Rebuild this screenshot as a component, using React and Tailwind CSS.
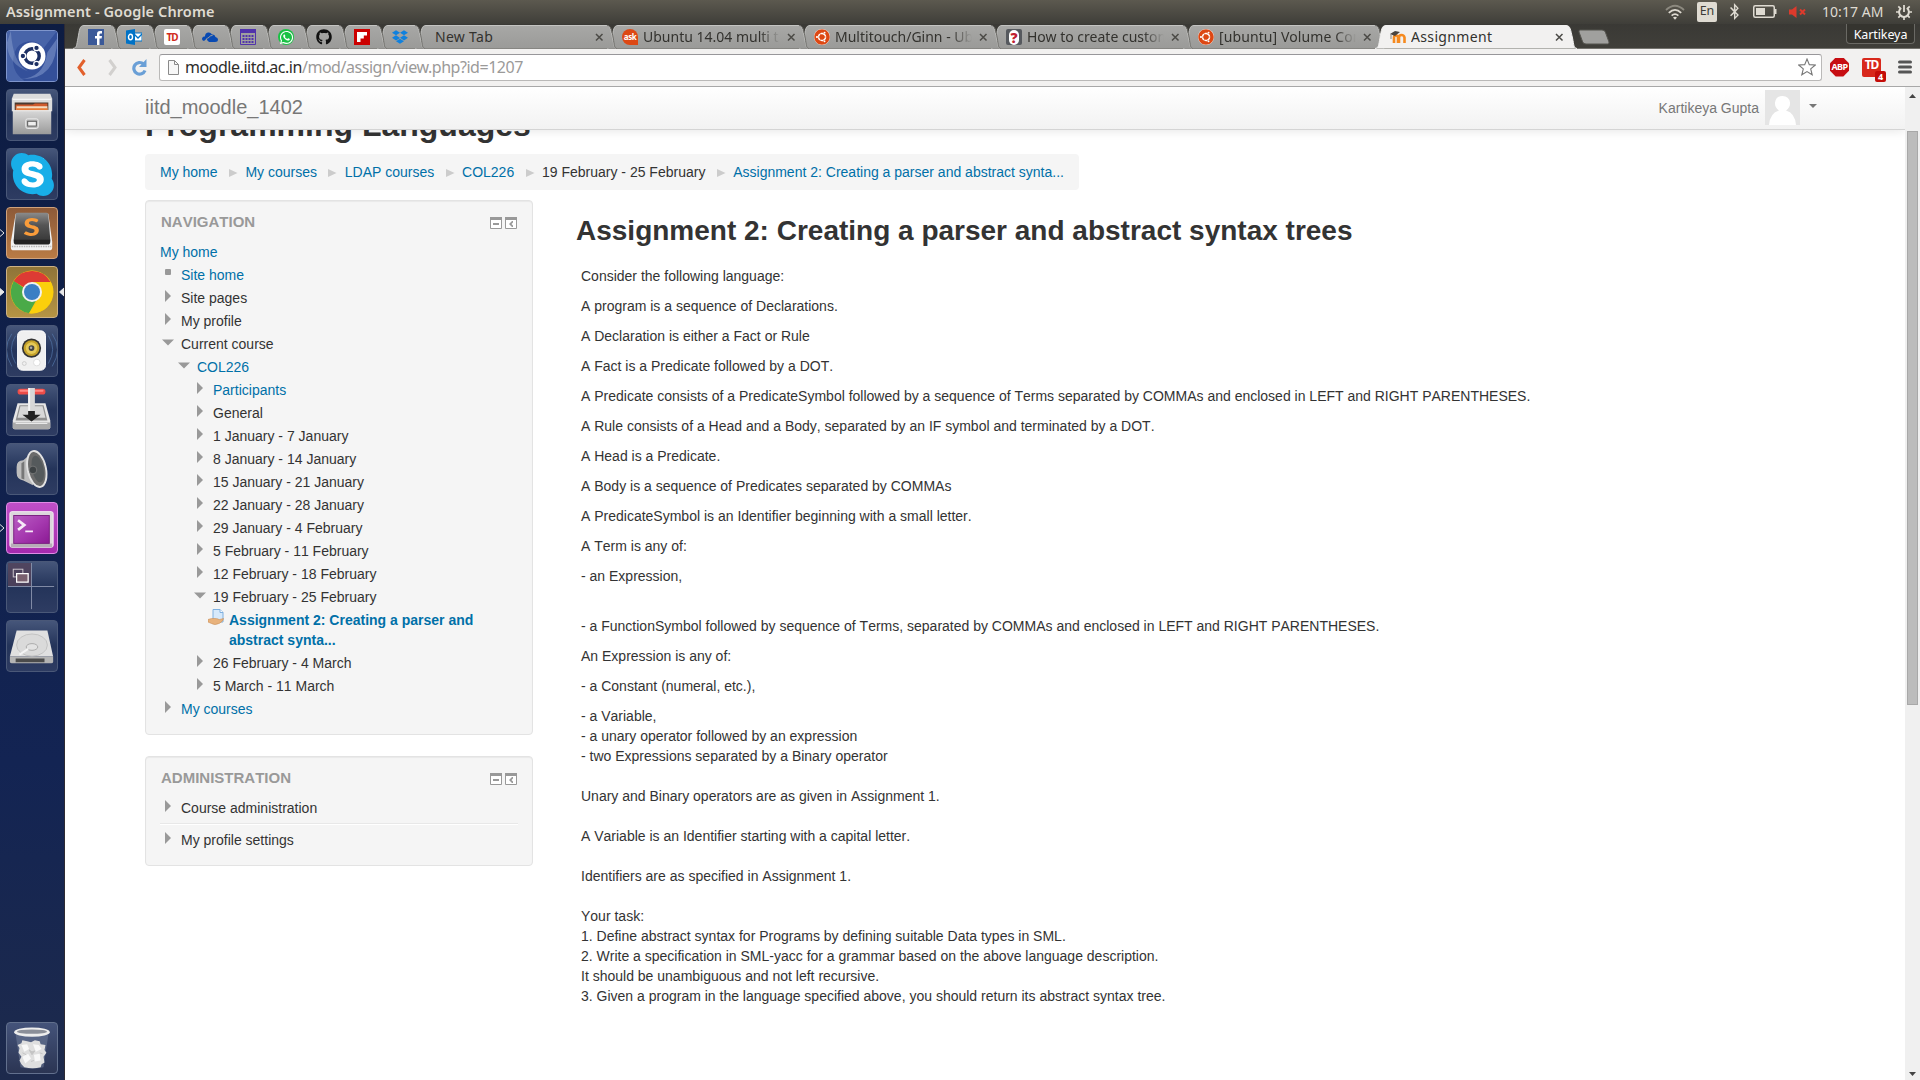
import React from "react";
import { FaGithub, FaDropbox, FaUbuntu, FaWhatsapp, FaSkype, FaBluetoothB } from "react-icons/fa";

const UI = "font-['Noto_Sans','Open_Sans',sans-serif]";

/* ---------- top panel ---------- */
function TopPanel() {
  return (
    <header className={`flex h-6 shrink-0 items-center bg-linear-to-b from-[#5c594f] to-[#3f3e39] pb-px pl-1.5 pr-2 text-[#dfdbd2] ${UI}`}>
      <span className="text-[14.5px] font-semibold leading-[23px] tracking-[0.1px]">Assignment - Google Chrome</span>
      <div className="ml-auto flex items-center">
        <svg className="mr-3" width="20" height="16" viewBox="0 0 20 16" fill="none" stroke="#dfdbd2" strokeWidth="1.8">
          <path d="M1 6Q10-2.500 19 6" stroke="#8c897f" />
          <path d="M3.800 8.800Q10 3 16.200 8.800M6.600 11.600Q10 8.600 13.400 11.600" />
          <path d="M8 13.500Q10 12 12 13.500L10 15.800z" fill="#dfdbd2" stroke="none" />
        </svg>
        <span className="mr-[9px] flex h-5 w-5 items-center justify-center rounded-[2px] bg-[#dfdbd2] text-[12.5px] text-[#3c3b37]">En</span>
        <FaBluetoothB className="mr-2.5" size={17} />
        <svg className="mr-3" width="24" height="13" viewBox="0 0 24 13">
          <rect x=".75" y=".75" width="20.500" height="11.500" rx="1.500" fill="none" stroke="#dfdbd2" strokeWidth="1.500" />
          <rect x="3" y="3" width="9" height="7" fill="#dfdbd2" />
          <path d="M22 4h1.500v5H22z" fill="#dfdbd2" />
        </svg>
        <svg className="mr-[15px]" width="18" height="12" viewBox="0 0 18 12">
          <path d="M0 3.500h3L7.500 0v12L3 8.500H0z" fill="#dd3a2c" />
          <path d="M11 3.500l5 5m0-5l-5 5" stroke="#dd3a2c" strokeWidth="2" />
        </svg>
        <span className="mr-[13px] w-[61px] whitespace-nowrap text-[14px] leading-[23px] tracking-[0.05px]">10:17 AM</span>
        <svg width="16" height="16" viewBox="0 0 16 16" fill="none" stroke="#dfdbd2">
          <path d="M5.200 4a4.900 4.900 0 1 0 5.600 0" strokeWidth="2" />
          <path d="M8 1v7" strokeWidth="1.800" />
          <path d="M0 8h3M13 8h3M2.300 2.300l2 2M13.700 2.300l-2 2M2.300 13.700l2-2M13.700 13.700l-2-2M8 13v3" strokeWidth="1.700" />
        </svg>
      </div>
    </header>
  );
}

/* ---------- launcher ---------- */
const tile = "relative flex h-[52px] w-[52px] shrink-0 items-center justify-center overflow-hidden rounded-[4px] border";
const darkTile = "border-[#4a5878] bg-linear-to-b from-[#46567a] via-[#24345a] to-[#2e3c62]";

function Pip({ side, filled }) {
  const cls = side === "left" ? "absolute -left-1.5 top-[21px]" : "absolute left-[53px] top-[21px]";
  return (
    <svg className={cls} width="5" height="10" viewBox="0 0 5 10">
      <path d={side === "left" ? "M0 1.500L4 5L0 8.500" : "M5 1L.5 5L5 9z"} fill={filled ? "#e8e8e8" : "none"} stroke="#e8e8e8" strokeWidth="1" />
    </svg>
  );
}

function Launcher() {
  return (
    <aside className="flex w-[65px] shrink-0 flex-col gap-[7px] border-r border-[#2d2a33] bg-linear-to-b from-[#0d1c42] via-[#132453] via-70% to-[#1d2a4c] px-1.5 pb-1.5 pt-1.5">
      <div className={`${tile} border-[#7f95cc] bg-[#3a559e]`}>
        <svg width="52" height="52" viewBox="0 0 52 52">
          <rect width="52" height="52" fill="#34509a" />
          <path d="M0 0h52L38 18A17 17 0 0 0 8 22Q2 40 18 52H0z" fill="#5672b4" opacity=".6" />
          <path d="M52 8Q52 52 12 50Q38 50 42 22z" fill="#8aa0d2" opacity=".5" />
          <path d="M4 0Q6 34 22 42Q0 34 0 12z" fill="#a6b8de" opacity=".35" />
          <circle cx="26" cy="26" r="14" fill="#fff" />
          <circle cx="26" cy="26" r="7.500" fill="none" stroke="#1c2f63" strokeWidth="3.600" />
          <g fill="#1c2f63" stroke="#fff" strokeWidth="1.300">
            <circle cx="16.500" cy="26" r="2.900" /><circle cx="30.700" cy="17.600" r="2.900" /><circle cx="30.700" cy="34.400" r="2.900" />
          </g>
        </svg>
      </div>

      <div className={`${tile} ${darkTile}`}>
        <svg width="52" height="52" viewBox="0 0 52 52">
          <defs><linearGradient id="cab" x2="0" y2="1"><stop stopColor="#d9d9d9" /><stop offset="1" stopColor="#9a9a9a" /></linearGradient></defs>
          <path d="M7 4h38l2 5v13H5V9z" fill="#dcdcdc" /><path d="M6 9h40v1.500H6z" fill="#f5f5f5" />
          <path d="M8 13h35v9H8z" fill="#4a3a30" />
          <path d="M9 15h18l2-1h13v8H9z" fill="#cf5a2c" /><path d="M10 17h32v5H10z" fill="#f4dcc0" /><path d="M10 19h32v3H10z" fill="#e87a35" />
          <path d="M6 21h40v25H6z" fill="url(#cab)" /><path d="M6 21h40v1H6z" fill="#eee" />
          <rect x="19.500" y="30" width="13" height="10" rx="2" fill="#bcbcbc" stroke="#ededed" />
          <rect x="21.500" y="32.500" width="9" height="5" fill="#eee" stroke="#555" />
        </svg>
      </div>

      <div className={`${tile} ${darkTile}`}>
        <span className="absolute h-8 w-6 bg-white" />
        <FaSkype className="relative text-[#18aee8]" size={49} />
      </div>

      <div className="relative">
        <div className={`${tile} border-[#d0a27c] bg-linear-to-b from-[#8d5a38] to-[#b97b45]`}>
          <svg width="52" height="52" viewBox="0 0 52 52">
            <defs><linearGradient id="sub" x2="0" y2="1"><stop stopColor="#8b8b8b" /><stop offset=".4" stopColor="#555" /><stop offset="1" stopColor="#333" /></linearGradient></defs>
            <path d="M9 6h34l4 29v6q0 3-3 3H7q-3 0-3-3v-6z" fill="#f1f1f1" /><path d="M5 40h41" stroke="#b3b3b3" strokeWidth="1.500" strokeDasharray="1.500 1" />
            <path d="M11 5h30q2 0 2 2l2 26q0 3-2 4H9q-2-1-2-4L9 7q0-2 2-2z" fill="url(#sub)" />
            <path d="M7 33h38v2q0 3-3 3H10q-3 0-3-3z" fill="#222" />
          </svg>
          <span className="absolute top-[3px] font-['Lato',sans-serif] text-[24px] font-black leading-8 text-[#f99c3a] scale-x-125">S</span>
        </div>
        <Pip side="left" />
      </div>

      <div className="relative">
        <div className={`${tile} border-[#cdb184] bg-linear-to-b from-[#8f7438] to-[#b59444]`}>
          <svg width="44" height="44" viewBox="0 0 44 44">
            <circle cx="22" cy="22" r="21.500" fill="#f7c90d" />
            <path d="M22 22L3.600 11.300A21.300 21.300 0 0 1 40.600 12H22z" fill="#dd3b34" />
            <path d="M3.800 11A21.500 21.500 0 0 0 19 43.200L28 27H22L13.300 17.500z" fill="#4aaa48" />
            <path d="M22 12h18.700A21.500 21.500 0 0 1 19 43.300L30.600 27z" fill="#fbcf0c" />
            <circle cx="22" cy="22" r="10" fill="#f1f1f1" /><circle cx="22" cy="22" r="8" fill="#3b7fc4" />
          </svg>
        </div>
        <Pip side="left" filled /><Pip side="right" filled />
      </div>

      <div className={`${tile} ${darkTile}`}>
        <svg width="52" height="52" viewBox="0 0 52 52">
          <g fill="none" stroke="#5b82b8" opacity=".6"><path d="M9 10Q0 24 9 39M5 8Q-6 24 5 42M43 10Q52 24 43 39M47 8Q58 24 47 42" /></g>
          <rect x="11" y="5" width="29" height="41" rx="5" fill="#f0f0f0" stroke="#fff" />
          <circle cx="25.500" cy="23" r="10" fill="#333" /><circle cx="25.500" cy="23" r="8.300" fill="#c5a22a" /><circle cx="25.500" cy="23" r="6" fill="#e5c957" /><circle cx="25.500" cy="23" r="3" fill="#444" /><circle cx="25" cy="22.500" r="1.300" fill="#aaa" />
          <circle cx="31" cy="38" r="3.500" fill="#fff" stroke="#ddd" /><circle cx="18" cy="39" r="2" fill="none" stroke="#ccc" />
        </svg>
      </div>

      <div className={`${tile} ${darkTile}`}>
        <svg width="52" height="52" viewBox="0 0 52 52">
          <path d="M11 19h29l5 18v7q0 2-2 2H8q-2 0-2-2v-7z" fill="#e6e6e6" /><path d="M13 21h25l4 16H9z" fill="#8f8f8f" /><path d="M14 22h23l3 12H11z" fill="#d8d8d8" /><path d="M6 39h39v5q0 2-2 2H8q-2 0-2-2z" fill="#aaa" /><path d="M9 40h33" stroke="#eee" />
          <rect x="11" y="4" width="29" height="6" rx="3" fill="#ed4c48" /><rect x="13" y="5" width="25" height="2" rx="1" fill="#ff8984" />
          <path d="M22 3h7v24h-7z" fill="#d7d7d7" /><path d="M22 3h2v24h-2z" fill="#f4f4f4" />
          <path d="M22 27h7v4h6L25.500 38L16 31h6z" fill="#222" />
        </svg>
      </div>

      <div className={`${tile} ${darkTile}`}>
        <svg width="52" height="52" viewBox="0 0 52 52">
          <path d="M10 24Q10 17 17 17L27 8V43L17 38Q10 37 10 30z" fill="#bdbdbd" />
          <path d="M15 20L18 18V37L15 36z" fill="#777" />
          <ellipse cx="31" cy="26" rx="9.500" ry="19" transform="rotate(-12 31 26)" fill="#6b6b6b" stroke="#e2e2e2" strokeWidth="2" />
          <ellipse cx="32" cy="26" rx="6" ry="14" transform="rotate(-12 32 26)" fill="#555a5c" /><circle cx="27" cy="27" r="4" fill="#3e4345" stroke="#888" strokeWidth=".7" />
        </svg>
      </div>

      <div className="relative">
        <div className={`${tile} border-[#e08be5] bg-linear-to-b from-[#bf4fc8] to-[#a62aae]`}>
          <svg width="52" height="52" viewBox="0 0 52 52">
            <defs><linearGradient id="term" x2="1" y2="1"><stop stopColor="#b95cc2" /><stop offset=".5" stopColor="#a63ab0" /><stop offset="1" stopColor="#8b1a94" /></linearGradient></defs>
            <rect x="3" y="9" width="45" height="37" rx="2" fill="#dcd6dc" stroke="#f5eef5" /><path d="M4 42h43v4H4z" fill="#b7adb7" />
            <rect x="7" y="13" width="37" height="29" fill="url(#term)" stroke="#7a2080" />
            <path d="M11.500 18l6.500 5l-6.500 5" fill="none" stroke="#f6e9f7" strokeWidth="2.800" /><path d="M19 29.500h8" stroke="#f6e9f7" strokeWidth="2" />
          </svg>
        </div>
        <Pip side="left" />
      </div>

      <div className={`${tile} ${darkTile}`}>
        <svg width="52" height="52" viewBox="0 0 52 52">
          <rect x="1" y="1" width="24" height="24" fill="#54425a" opacity=".8" /><path d="M25.500 1v48M1 25.500h48" stroke="#8590aa" />
          <rect x="6.500" y="7.500" width="10" height="8" fill="none" stroke="#cfc8cf" /><path d="M10 12h12v9H10z" fill="#79606f" stroke="#fff" strokeWidth="1.300" />
        </svg>
      </div>

      <div className={`${tile} ${darkTile}`}>
        <svg width="52" height="52" viewBox="0 0 52 52">
          <path d="M10 10h32l6 27H3z" fill="#e0e0e0" /><path d="M3 37h45v5q0 2-2 2H5q-2 0-2-2z" fill="#b4b4b4" /><path d="M9 39h30v4H9z" fill="#4b4b4b" />
          <ellipse cx="26" cy="25" rx="16" ry="11.500" fill="#dadada" stroke="#c2c2c2" /><ellipse cx="26" cy="27" rx="6" ry="3.500" fill="#e2e2e2" stroke="#aaa" />
          <path d="M13 35l9-6" stroke="#f4f4f4" strokeWidth="2" />
        </svg>
      </div>

      <div className={`${tile} mt-auto border-[#62708d] bg-linear-to-b from-[#44537a] to-[#2b3553]`}>
        <svg width="52" height="52" viewBox="0 0 52 52">
          <path d="M9 12h34l-5 34q-12 3-24 0z" fill="#7d8aa5" opacity=".45" />
          <path d="M11 23l4-2 1-3 5 1 4 1 4-2 5 1 1 3 5 1-1 5 2 3-3 4 1 6-3 2-1 3q-8 2-17 0l-3-3-2-4 2-4-3-4 1-5z" fill="#dfdfdf" />
          <path d="M15 23l6-1 2 5-5 3zM27 22l6 1 3 4-6 3zM16 35l6-3 3 5-6 5zM28 33l6-1 1 7-6 1z" fill="#f8f8f8" />
          <path d="M23 28l3 2 3-1-3 4zM16 31l4 2M34 31l3 1M25 40l3-1" fill="#c4c4c4" stroke="#c4c4c4" />
          <ellipse cx="26" cy="9.500" rx="18.500" ry="4.800" fill="#ededed" /><ellipse cx="26" cy="9" rx="15.500" ry="2.300" fill="#8b8f99" />
        </svg>
      </div>
    </aside>
  );
}

/* ---------- tabs ---------- */
function TabShape({ width, active }) {
  const w = width;
  const shape = `M0 24.500C4 24 3.500 21 5 14C6.500 6 6.500 1.500 11 1.500H${w - 11}C${w - 6.500} 1.500 ${w - 6.500} 6 ${w - 4.500} 14C${w - 3} 21 ${w - 3.500} 24 ${w} 24.500`;
  return (
    <svg className="absolute inset-0" width={w} height="25" viewBox={`0 0 ${w} 25`}>
      <defs><linearGradient id="tab" x2="0" y2="1"><stop stopColor="#a8a8a6" /><stop offset="1" stopColor="#9a9a98" /></linearGradient></defs>
      <path d={shape} fill={active ? "#f2f1f0" : "url(#tab)"} stroke={active ? "#f2f1f0" : "#c4c4c2"} strokeWidth="1" />
      {!active && <path d={`M${w - 10} 1.500C${w - 5.500} 2 ${w - 5.500} 6 ${w - 3.800} 14C${w - 2.500} 21 ${w - 3} 24 ${w} 24.500`} fill="none" stroke="#6e6d69" />}
    </svg>
  );
}

function UbuntuIcon() {
  return <span className="flex h-4 w-4 items-center justify-center rounded-full bg-white"><FaUbuntu size={16} color="#dd4814" /></span>;
}

const pinned = [
  <svg width="16" height="16" viewBox="0 0 16 16"><path d="M0 0h16v16H0z" fill="#3b5998" /><path d="M9 16V9.500H7V7h2V5q0-3 3-3h2v2.500h-1.300Q11.500 4.500 11.500 5.500V7H14l-.4 2.500h-2.100V16z" fill="#fff" /></svg>,
  <svg width="16" height="16" viewBox="0 0 16 16"><path d="M8 4h8v8H8z" fill="#fff" stroke="#0072c6" /><path d="M8 5l4 4 4-4" fill="none" stroke="#0072c6" strokeWidth="1.300" /><path d="M0 1.500L9 0v16L0 14.500z" fill="#0072c6" /><ellipse cx="4.500" cy="8" rx="2" ry="2.700" fill="none" stroke="#fff" strokeWidth="1.400" /></svg>,
  <span className="flex h-4 w-4 items-center justify-center rounded-[2px] bg-white text-[10px] font-bold tracking-[-1px] text-[#d02a20]">TD</span>,
  <svg width="16" height="16" viewBox="0 0 16 16"><path d="M2 12Q-1 11 .5 8.500Q1.500 7 3 7.500Q3 4 6 3.500Q8.500 3 10 5.500Q13 5 13.500 8Q16 8.500 16 10.500Q16 13 13 13H7L5 11Q4 9 6.500 8" fill="#094ab2" /><path d="M4.800 13Q3.500 9 7 8.500Q8 6 10.500 6.500" fill="none" stroke="#a0a09e" /></svg>,
  <svg width="16" height="16" viewBox="0 0 16 16"><path d="M.5 1h15v14.500H.5z" fill="#a0a09e" stroke="#5133ab" /><path d="M0 0h16v4H0z" fill="#5133ab" /><path d="M3.500 6v8M6.500 6v8M9.500 6v8M12.500 6v8" stroke="#5133ab" strokeWidth="2" strokeDasharray="2 1" /></svg>,
  <span className="flex h-4 w-4 items-center justify-center rounded-full bg-[#19c244]"><FaWhatsapp size={15} color="#fff" /></span>,
  <FaGithub size={16} color="#111" />,
  <svg width="16" height="16" viewBox="0 0 16 16"><path d="M0 0h16v16H0z" fill="#c00" /><path d="M3 3h10v3.400H9.800v3.200H6.500V13H3z" fill="#fff" /></svg>,
  <FaDropbox size={16} color="#1081de" />,
];

const askIcon = <span className="relative flex h-4 w-4 items-center justify-center rounded-full rounded-br-none bg-[#dd4814] text-[8px] font-bold tracking-[-0.5px] text-white">ask</span>;
const whatIcon = <span className="flex h-4 w-4 items-center justify-center rounded-[2px] bg-[#56595e]"><span className="flex h-[15px] w-[10px] items-center justify-center rounded-full bg-white text-[14px] font-black text-[#c02030]">?</span></span>;
const moodleIcon = (
  <svg width="16" height="16" viewBox="0 0 16 16"><path d="M4 14V8.500Q4 6.500 6 6.500T8 8.500V14M9 14V8.500Q9 6 11.500 6T14.500 8.500V14" fill="none" stroke="#f68a1f" strokeWidth="2.600" /><path d="M0 5l5-3 5 1-5 4z" fill="#4a4540" /><path d="M1 5v5" stroke="#8d8780" /></svg>
);

const tabs = [
  { title: "New Tab", z: "z-7", spacing: "tracking-[0.3px]" },
  { title: "Ubuntu 14.04 multi t", icon: askIcon, z: "z-6", spacing: "tracking-normal" },
  { title: "Multitouch/Ginn - Ubuntu", icon: <UbuntuIcon />, z: "z-5", spacing: "tracking-normal" },
  { title: "How to create custom", icon: whatIcon, z: "z-4", spacing: "tracking-normal" },
  { title: "[ubuntu] Volume Control", icon: <UbuntuIcon />, z: "z-3", spacing: "tracking-[0.1px]" },
  { title: "Assignment", icon: moodleIcon, z: "z-20", active: true, spacing: "tracking-[0.35px]" },
];
const pinnedZ = ["z-18", "z-17", "z-16", "z-15", "z-14", "z-13", "z-12", "z-11", "z-10"];

function TabStrip() {
  return (
    <div className={`flex h-[25px] shrink-0 border-b border-[#73726d] bg-linear-to-b from-[#3a3935] to-[#403f3a] pl-2 ${UI}`}>
      {pinned.map((icon, i) => (
        <div key={i} className={`relative -mr-2.5 flex h-[25px] w-12 shrink-0 justify-center pt-[5px] pr-0.5 ${pinnedZ[i]}`}>
          <TabShape width={48} />
          <span className="relative h-4">{icon}</span>
        </div>
      ))}
      {tabs.map((t) => (
        <div key={t.title} className={`relative -mr-2.5 flex h-[25px] w-[202px] shrink-0 items-center ${t.icon ? "pl-[15px]" : "pl-5"} pr-[13px] ${t.z}`}>
          <TabShape width={202} active={t.active} />
          {t.icon && <span className="relative mr-[5px] mt-px">{t.icon}</span>}
          <span className={`relative mr-[7px] mt-px min-w-0 flex-1 overflow-hidden whitespace-nowrap text-[14px] leading-5 text-[#33322e] ${t.spacing} ${t.active || !t.icon ? "" : "mask-r-from-85% mask-r-to-100%"}`}>{t.title}</span>
          <svg className="relative mt-px" width="9" height="9" viewBox="0 0 9 9"><path d="M1 1l6.500 6.500m0-6.500L1 7.500" stroke="#4b4a46" strokeWidth="1.500" /></svg>
        </div>
      ))}
      <svg className="ml-[11px] mt-[5px]" width="32" height="16" viewBox="0 0 32 16"><path d="M2 1h22q2.500 0 3.300 2L31 13q.5 2-1.500 2H8q-2.500 0-3.300-2L1 3q-.5-2 1-2z" fill="#a0a09e" stroke="#55544f" /></svg>
      <span className="ml-auto mr-[5px] flex h-5 w-[69px] items-center justify-center rounded-b-[4px] border border-t-0 border-[#6a6964] bg-[#35342f] pt-0.5 text-[12.500px] leading-4 tracking-[-0.1px] text-white">Kartikeya</span>
    </div>
  );
}

function Toolbar() {
  return (
    <div className={`flex h-[38px] shrink-0 items-center border-b border-[#a8a8a8] bg-[#f2f1f0] pb-px pl-3 pr-2 ${UI}`}>
      <svg width="9" height="17" viewBox="0 0 9 17"><path d="M7.500 1L2 8.500l5.500 7.500" fill="none" stroke="#e2602c" strokeWidth="3" /></svg>
      <svg className="ml-[22px]" width="9" height="17" viewBox="0 0 9 17"><path d="M1.500 1L7 8.500L1.500 16" fill="none" stroke="#d2d0ce" strokeWidth="3" /></svg>
      <svg className="ml-3.5" width="16" height="17" viewBox="0 0 16 17"><path d="M12.500 5A5.800 5.800 0 1 0 14 11.500" fill="none" stroke="#6a9fd6" strokeWidth="3.200" /><path d="M15.500 0v8H8z" fill="#6a9fd6" /></svg>
      <div className="ml-3 flex h-[27px] flex-1 items-center rounded-[3px] border border-[#bab9b8] border-t-[#98979a] bg-white pl-2 pr-[5px]">
        <svg width="11" height="15" viewBox="0 0 11 15"><path d="M.5.5h6l4 4v10H.5z" fill="#f7f7f7" stroke="#8a8a8a" /><path d="M6.500.5v4h4" fill="none" stroke="#8a8a8a" /></svg>
        <span className="ml-[6px] text-[16px] leading-6 tracking-[-0.46px] text-[#9b9a99]"><span className="text-[#2e2d2b]">moodle.iitd.ac.in</span>/mod/assign/view.php?id=1207</span>
        <svg className="ml-auto" width="18" height="18" viewBox="0 0 18 18"><path d="M9 1l2.300 5.600 6 .4-4.600 3.900 1.500 5.900L9 13.600l-5.200 3.200 1.500-5.900L.7 7l6-.4z" fill="#fff" stroke="#777" strokeWidth="1.100" /></svg>
      </div>
      <span className="ml-2 flex h-[19px] w-[19px] items-center justify-center bg-[#c70d12] text-[9px] font-bold tracking-[-0.6px] text-white [clip-path:polygon(30%_0,70%_0,100%_30%,100%_70%,70%_100%,30%_100%,0_70%,0_30%)]">ABP</span>
      <span className="relative ml-[13px] flex h-[19px] w-[19px] items-center justify-center rounded-[2px] bg-[#d8281c] pb-1 text-[12px] font-bold tracking-[-1px] text-white">
        TD
        <span className="absolute -bottom-[5px] -right-[5px] flex h-[11px] w-[11px] items-center justify-center rounded-[2px] bg-[#c40c08] text-[9px] leading-none tracking-normal">4</span>
      </span>
      <svg className="ml-[17px]" width="14" height="14" viewBox="0 0 14 14"><path d="M1.500 2h11M1.500 7h11M1.500 12h11" stroke="#555" strokeWidth="3" strokeLinecap="round" /></svg>
    </div>
  );
}

/* ---------- page ---------- */
const crumbs = [
  ["My home", true], ["My courses", true], ["LDAP courses", true], ["COL226", true],
  ["19 February - 25 February", false], ["Assignment 2: Creating a parser and abstract synta...", true],
];

function Marker({ kind }) {
  if (kind === "dot") return <span className="mt-[3.500px] block h-1.5 w-1.5 rounded-[1px] bg-[#999]" />;
  if (kind === "open") return <svg className="mt-[5px]" width="12" height="7" viewBox="0 0 12 7"><path d="M0 .5h12L6 6.500z" fill="#999" /></svg>;
  if (kind === "assign")
    return (
      <svg className="-mt-px" width="16" height="16" viewBox="0 0 16 16"><path d="M5 .5h7l3 3V13H5z" fill="#d6e9fb" stroke="#7fb0e0" /><path d="M12 .5v3h3" fill="#fff" stroke="#7fb0e0" /><path d="M0 10.500Q4 9 7 9.500q4 .2 4 1.200l4.500-1.200q0 2.500-4 4.800-5 2.500-8 .2L0 13z" fill="#e8b27c" stroke="#c98e58" strokeWidth=".6" /></svg>
    );
  return <svg className="mt-0.5" width="6" height="12" viewBox="0 0 6 12"><path d="M0 0l6 6-6 6z" fill="#999" /></svg>;
}

const nav = [
  ["Site home", 0, "dot", true], ["Site pages", 0, "closed"], ["My profile", 0, "closed"], ["Current course", 0, "open"],
  ["COL226", 1, "open", true], ["Participants", 2, "closed", true], ["General", 2, "closed"],
  ["1 January - 7 January", 2, "closed"], ["8 January - 14 January", 2, "closed"], ["15 January - 21 January", 2, "closed"],
  ["22 January - 28 January", 2, "closed"], ["29 January - 4 February", 2, "closed"], ["5 February - 11 February", 2, "closed"],
  ["12 February - 18 February", 2, "closed"], ["19 February - 25 February", 2, "open"],
  ["Assignment 2: Creating a parser and abstract synta...", 3, "assign", true],
  ["26 February - 4 March", 2, "closed"], ["5 March - 11 March", 2, "closed"], ["My courses", 0, "closed", true],
];
const indent = ["pl-0", "pl-4", "pl-8", "pl-12"];

function TreeRow({ item }) {
  const [label, level, kind, link] = item;
  return (
    <li className={`flex pt-[3px] ${indent[level]}`}>
      <span className="mr-[5px] flex w-4 shrink-0 items-start justify-center">
        <Marker kind={kind} />
      </span>
      <span className={`${link ? "text-[#0070a8]" : ""} ${kind === "assign" ? "w-[250px] font-bold" : ""}`}>{label}</span>
    </li>
  );
}

function Block({ title, children, className }) {
  return (
    <section className={`rounded-[4px] border border-[#e3e3e3] bg-[#f5f5f5] px-3.5 shadow-[inset_0_1px_1px_rgba(0,0,0,0.05)] ${className}`}>
      <div className="mt-[11px] flex h-5 items-center pl-px pr-px">
        <h2 className="text-[15px] font-bold leading-5 text-[#999]">{title}</h2>
        <svg className="ml-auto mt-px" width="27" height="12" viewBox="0 0 27 12">
          <path d="M.5 1h11v10.500H.5zM15.500 1h11v10.500h-11z" fill="#fff" stroke="#999" />
          <path d="M0 0h12v3H0zM15 0h12v3H15zM3 6h6v2H3zM22 4l-3 3 3 3h1V8.500L21.500 7 23 5.500V4z" fill="#999" />
        </svg>
      </div>
      {children}
    </section>
  );
}

const groups = [
  ["Consider the following language:"],
  ["A program is a sequence of Declarations."],
  ["A Declaration is either a Fact or Rule"],
  ["A Fact is a Predicate followed by a DOT."],
  ["A Predicate consists of a PredicateSymbol followed by a sequence of Terms separated by COMMAs and enclosed in LEFT and RIGHT PARENTHESES."],
  ["A Rule consists of a Head and a Body, separated by an IF symbol and terminated by a DOT."],
  ["A Head is a Predicate."],
  ["A Body is a sequence of Predicates separated by COMMAs"],
  ["A PredicateSymbol is an Identifier beginning with a small letter."],
  ["A Term is any of:"],
  ["- an Expression,"],
  ["", "- a FunctionSymbol followed by sequence of Terms, separated by COMMAs and enclosed in LEFT and RIGHT PARENTHESES."],
  ["An Expression is any of:"],
  ["- a Constant (numeral, etc.),"],
  [
    "- a Variable,", "- a unary operator followed by an expression", "- two Expressions separated by a Binary operator", "",
    "Unary and Binary operators are as given in Assignment 1.", "",
    "A Variable is an Identifier starting with a capital letter.", "",
    "Identifiers are as specified in Assignment 1.", "",
    "Your task:", "1. Define abstract syntax for Programs by defining suitable Data types in SML.",
    "2. Write a specification in SML-yacc for a grammar based on the above language description.",
    "It should be unambiguous and not left recursive.",
    "3. Given a program in the language specified above, you should return its abstract syntax tree.",
  ],
];

function Page() {
  return (
    <div className="flex min-w-0 flex-1 flex-col overflow-hidden bg-white font-['Liberation_Sans',Arial,sans-serif] text-[14px] leading-5 text-[#333] [font-kerning:none]">
      <nav className="relative z-10 flex h-[43px] shrink-0 items-center border-b border-[#d4d4d4] bg-linear-to-b from-white to-[#f2f2f2] pb-px pl-20 pr-[88px] text-[#777] shadow-[0_1px_10px_rgba(0,0,0,0.1)]">
        <span className="-mt-px text-[20px] leading-5">iitd_moodle_1402</span>
        <span className="ml-auto">Kartikeya Gupta</span>
        <svg className="ml-1.5" width="35" height="35" viewBox="0 0 35 35"><path d="M0 0h35v35H0z" fill="#e5e5e5" /><path d="M4 35q1-12 10-14.500Q9.500 17 10 12.500 11 6 17.500 6T25 12.500Q25.500 17 21 20.500 30 23 31 35z" fill="#fff" /></svg>
        <svg className="ml-[9px] -mt-[3px]" width="8" height="4" viewBox="0 0 8 4"><path d="M0 0h8L4 4z" fill="#777" /></svg>
      </nav>
      <main className="flex flex-col pl-20">
        <h1 className="-mt-[25px] h-10 text-[32px] font-bold leading-10">Programming Languages</h1>
        <ul className="mt-[9px] flex h-9 items-center self-start rounded-[4px] bg-[#f5f5f5] px-[15px]">
          {crumbs.map(([label, link], i) => (
            <li key={label} className="flex items-center">
              {i > 0 && <svg className="ml-[11.500px] mr-[7.300px] mt-px" width="9" height="8" viewBox="0 0 9 8"><path d="M0 0l8.500 4L0 8z" fill="#ccc" /></svg>}
              <span className={`whitespace-nowrap ${link ? "text-[#0070a8]" : ""}`}>{label}</span>
            </li>
          ))}
        </ul>
        <div className="mt-2.5 flex items-start">
          <div className="w-[388px] shrink-0">
            <Block title="NAVIGATION" className="h-[535px]">
              <ul className="mt-2.5 text-[#333]">
                <li className="text-[#0070a8]">My home</li>
                {nav.map((n) => <TreeRow key={n[0]} item={n} />)}
              </ul>
            </Block>
            <Block title="ADMINISTRATION" className="mt-[21px] h-[110px]">
              <ul className="mt-[7px] text-[#333]">
                <TreeRow item={["Course administration", 0, "closed"]} />
                <li className="mt-[5px] border-b border-white"><div className="h-px bg-[#e8e8e8]" /></li>
              </ul>
              <ul className="mt-px pt-px"><TreeRow item={["My profile settings", 0, "closed"]} /></ul>
            </Block>
          </div>
          <article className="ml-[43px] pt-[11px]">
            <h2 className="text-[28px] font-bold leading-10">Assignment 2: Creating a parser and abstract syntax trees</h2>
            <div className="mt-[15px] pl-[5px]">
              {groups.map((lines, i) => (
                <p key={i} className="mb-2.5">
                  {lines.map((l, j) => <span key={j} className="block min-h-5 whitespace-nowrap">{l}</span>)}
                </p>
              ))}
            </div>
          </article>
        </div>
      </main>
    </div>
  );
}

function Scrollbar() {
  return (
    <div className="flex w-[15px] shrink-0 flex-col items-center justify-between bg-[#f0f0f0] pb-1 pt-[7px]">
      <svg width="7" height="4" viewBox="0 0 7 4"><path d="M0 4h7L3.500 0z" fill="#444" /></svg>
      <span className="mb-auto mt-[33px] h-[574px] w-[11px] border border-[#a8a8a8] bg-[#bcbcbc]" />
      <svg width="7" height="4" viewBox="0 0 7 4"><path d="M0 0h7L3.500 4z" fill="#444" /></svg>
    </div>
  );
}

export default function App() {
  return (
    <div className="flex h-[1080px] w-[1920px] flex-col overflow-hidden">
      <TopPanel />
      <div className="flex min-h-0 flex-1">
        <Launcher />
        <div className="flex min-w-0 flex-1 flex-col">
          <TabStrip />
          <Toolbar />
          <div className="flex min-h-0 flex-1">
            <Page />
            <Scrollbar />
          </div>
        </div>
      </div>
    </div>
  );
}
